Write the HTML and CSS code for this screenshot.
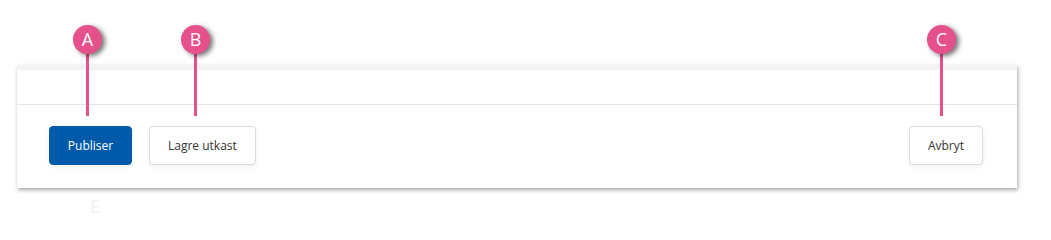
FILE: index.html
```html
<!DOCTYPE html>
<html>
<head>
<meta charset="utf-8">
<link rel="stylesheet" href="styles.css">
</head>
<body>
<div class="stage">
  <div class="panel">
    <div class="panel-top"></div>
    <div class="panel-head"></div>
    <div class="panel-foot">
      <button class="btn btn-primary">Publiser</button>
      <button class="btn">Lagre utkast</button>
      <span class="spacer"></span>
      <button class="btn">Avbryt</button>
    </div>
  </div>
  <div class="ghost">E</div>

  <div class="callout callout-a"><span class="badge">A</span><span class="stem"></span></div>
  <div class="callout callout-b"><span class="badge">B</span><span class="stem"></span></div>
  <div class="callout callout-c"><span class="badge">C</span><span class="stem"></span></div>
</div>
</body>
</html>
```
FILE: styles.css
```css
html, body {
  margin: 0;
  padding: 0;
  background: #ffffff;
  font-family: "Open Sans", "Liberation Sans", sans-serif;
}
.stage {
  position: relative;
  width: 1051px;
  height: 234px;
  padding-top: 65px;
  box-sizing: border-box;
}
.panel {
  margin-left: 17px;
  width: 1000px;
  height: 123px;
  background: #ffffff;
  box-shadow: 1px 2px 4px rgba(0, 0, 0, 0.35);
  display: flex;
  flex-direction: column;
}
.panel-top {
  height: 5px;
  background: #f2f2f2;
}
.panel-head {
  height: 34px;
  border-bottom: 1px solid #e4e4e6;
}
.panel-foot {
  flex: 1;
  display: flex;
  align-items: flex-start;
  padding: 21px 34px 0 32px;
  gap: 17px;
}
.spacer { flex: 1; }
.btn {
  height: 39px;
  padding: 0 18px;
  border: 1px solid #dcdcdc;
  border-radius: 4px;
  background: #ffffff;
  color: #333333;
  font-family: "Open Sans", "Liberation Sans", sans-serif;
  font-size: 12px;
  box-shadow: 0 2px 5px rgba(0, 0, 0, 0.06);
}
.btn-primary {
  width: 83px;
  padding: 0;
  background: #005aaa;
  border-color: #005aaa;
  color: #ffffff;
  font-weight: 500;
}
.ghost {
  margin: 8px 0 0 90px;
  color: #f0f0f0;
  font-size: 19px;
  font-weight: 500;
  line-height: 20px;
}
.callout {
  position: absolute;
  top: 25px;
  width: 29px;
  display: flex;
  flex-direction: column;
  align-items: center;
}
.callout-a { left: 73px; }
.callout-b { left: 181px; }
.callout-c { left: 927px; }
.badge {
  width: 29px;
  height: 29px;
  border-radius: 50%;
  background: #e6508b;
  color: #ffffff;
  font-size: 18px;
  font-weight: 500;
  line-height: 29px;
  text-align: center;
  box-shadow: 3px 2px 5px rgba(0, 0, 0, 0.55);
  position: relative;
  z-index: 1;
}
.stem {
  width: 3px;
  height: 62px;
  background: #e6508b;
}
```
